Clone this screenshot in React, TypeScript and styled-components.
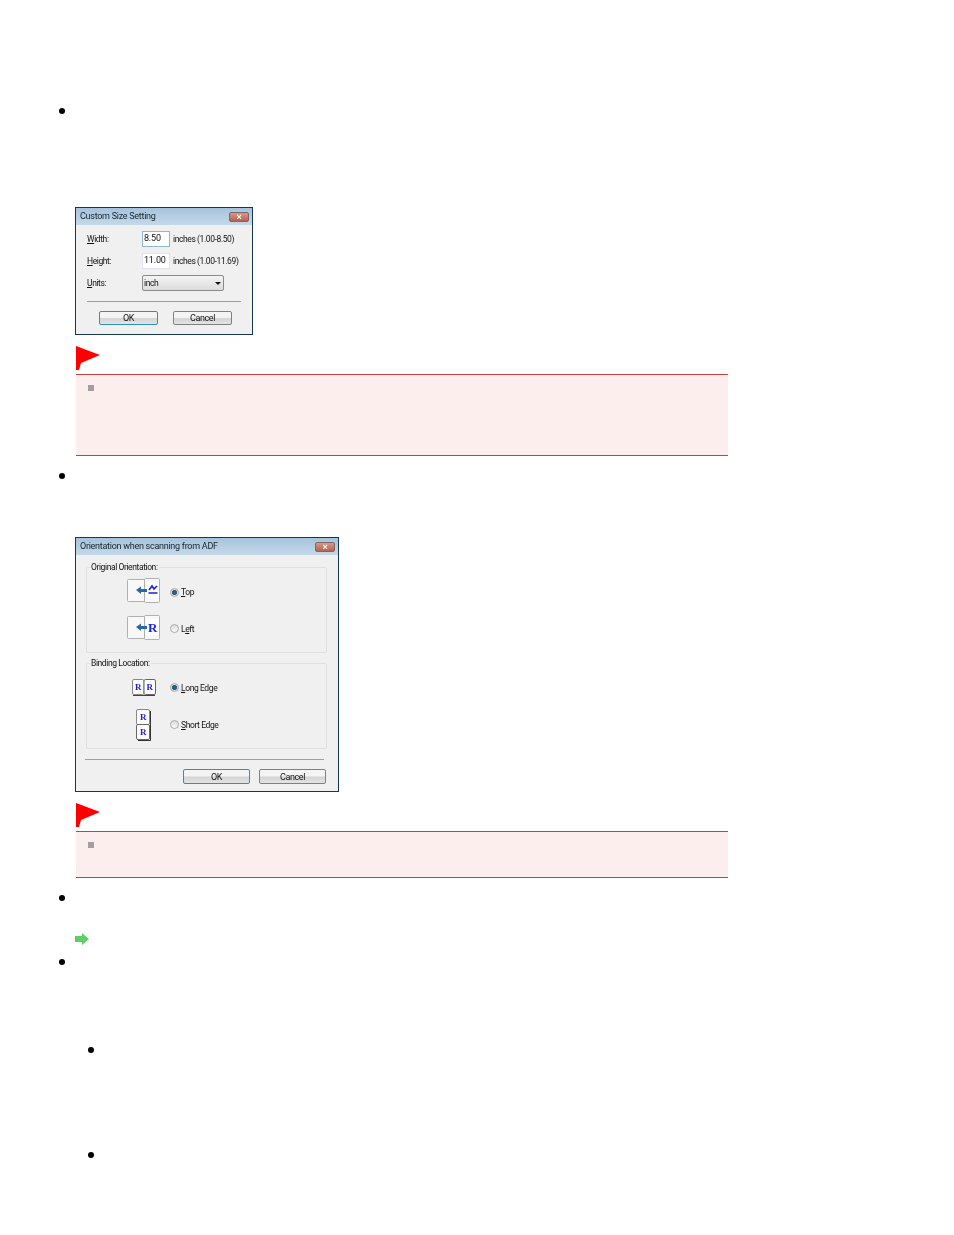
import styled, { createGlobalStyle } from "styled-components";

const GlobalStyle = createGlobalStyle`
    html, body {
        margin: 0;
        padding: 0;
        background: #fff;
    }
`;

const Page = styled.div`
    width: 954px;
    height: 1235px;
    padding: 108px 0 0 59px;
    box-sizing: border-box;
    overflow: hidden;
`;

const Bullet = styled.div<{ $top?: number; $left?: number }>`
    width: 6px;
    height: 6px;
    border-radius: 50%;
    background: #000;
    margin-top: ${(p) => p.$top ?? 0}px;
    margin-left: ${(p) => p.$left ?? 0}px;
`;

const Indented = styled.div<{ $top: number }>`
    margin: ${(p) => p.$top}px 0 0 16px;
`;

const Dialog = styled.div<{ $width: number; $height: number }>`
    width: ${(p) => p.$width}px;
    height: ${(p) => p.$height}px;
    box-sizing: border-box;
    border: 1px solid #17384c;
    background: #f0f0f0;
    display: flex;
    flex-direction: column;
    font-family: Roboto, "Liberation Sans", sans-serif;
    font-size: 8.5px;
    letter-spacing: -0.4px;
    line-height: 10px;
    color: #111;
    white-space: nowrap;
    filter: blur(0.4px);
`;

const TitleBar = styled.div`
    height: 17px;
    flex: none;
    display: flex;
    align-items: center;
    justify-content: space-between;
    padding: 0 3px 2px 4px;
    box-sizing: border-box;
    background: linear-gradient(#a6c3dc, #c4d9ea);
    font-size: 9px;
    letter-spacing: -0.27px;
    color: #16222b;
`;

const CloseBox = styled.div`
    width: 20px;
    height: 10px;
    margin-top: 2px;
    border-radius: 2px;
    border: 1px solid #85635f;
    box-sizing: border-box;
    background: linear-gradient(#d39a8c, #b8604e);
    color: #fff;
    font: bold 9px/8px "Liberation Sans", sans-serif;
    text-align: center;
`;

const SizeForm = styled.div`
    padding: 6px 11px 0 11px;
    display: flex;
    flex-direction: column;
`;

const SizeRow = styled.div`
    display: grid;
    grid-template-columns: 52px 28px auto;
    column-gap: 3px;
    align-items: center;
    height: 16px;
    margin-bottom: 6px;
`;

const TextInput = styled.div`
    height: 16px;
    box-sizing: border-box;
    background: #fff;
    border: 1px solid #e2e6ea;
    padding: 1px 1px;
    font-size: 9px;
    letter-spacing: -0.2px;
`;

const FocusInput = styled(TextInput)`
    border-color: #8fb6d2;
`;

const Select = styled.div`
    grid-column: 2 / 4;
    width: 82px;
    height: 16px;
    box-sizing: border-box;
    border: 1px solid #8a8a8a;
    border-radius: 2px;
    background: linear-gradient(#f4f4f4, #dcdcdc);
    padding: 0 2px 0 1px;
    display: flex;
    align-items: center;
    justify-content: space-between;
`;

const Caret = styled.div`
    width: 0;
    height: 0;
    border-left: 3px solid transparent;
    border-right: 3px solid transparent;
    border-top: 3px solid #111;
`;

const Separator = styled.div<{ $left: number; $width: number; $top: number }>`
    height: 1px;
    width: ${(p) => p.$width}px;
    margin: ${(p) => p.$top}px 0 0 ${(p) => p.$left}px;
    background: #a0a0a0;
`;

const ButtonRow = styled.div<{ $left: number; $top: number; $gap: number }>`
    display: flex;
    gap: ${(p) => p.$gap}px;
    margin: ${(p) => p.$top}px 0 0 ${(p) => p.$left}px;
`;

const Button = styled.div<{ $width: number; $height: number; $primary?: boolean }>`
    width: ${(p) => p.$width}px;
    height: ${(p) => p.$height}px;
    box-sizing: border-box;
    border: 1px solid ${(p) => (p.$primary ? "#2f8fc0" : "#808080")};
    border-radius: 2px;
    background: linear-gradient(#f4f4f4 45%, #d4d4d4 55%, #e4e4e4);
    display: flex;
    align-items: center;
    justify-content: center;
    font-size: 9px;
    letter-spacing: -0.4px;
`;

const OrientationBody = styled.div`
    padding: 12px 0 0 10px;
    display: flex;
    flex-direction: column;
    gap: 10px;
`;

const Group = styled.div`
    position: relative;
    width: 241px;
    height: 86px;
    box-sizing: border-box;
    border: 1px solid #e0e0e0;
    border-radius: 2px;
`;

const GroupLegend = styled.div`
    position: absolute;
    top: -6px;
    left: 3px;
    padding: 0 1px;
    background: #f0f0f0;
`;

const OptionRow = styled.div<{ $height: number }>`
    height: ${(p) => p.$height}px;
    display: flex;
    align-items: center;
`;

const OptionIcon = styled.div`
    width: 83px;
    flex: none;
    display: flex;
    justify-content: center;
    padding-left: 30px;
    box-sizing: border-box;
`;

const PageIconSvg = styled.svg`
    margin-bottom: 3px;
`;

const Radio = styled.div<{ $checked?: boolean }>`
    width: 9px;
    height: 9px;
    margin-right: 2px;
    flex: none;
    box-sizing: border-box;
    border-radius: 50%;
    border: 1px solid #a8a8a8;
    background: ${(p) => (p.$checked ? "radial-gradient(circle, #2c5f86 0 2.2px, #dfe6ea 3px)" : "linear-gradient(#dcdcdc, #fafafa)")};
`;

const GroupRows = styled.div`
    padding-top: 6px;
    display: flex;
    flex-direction: column;
`;

const FlagRow = styled.div<{ $top: number }>`
    margin: ${(p) => p.$top}px 0 0 17px;
    height: 24px;
`;

const NoteBox = styled.div<{ $height: number }>`
    width: 652px;
    height: ${(p) => p.$height}px;
    margin: 4px 0 0 17px;
    box-sizing: border-box;
    background: #fdeeee;
    border-top: 1px solid #c8403c;
    border-bottom: 1px solid #c8403c;
    padding: 10px 0 0 12px;
`;

const NoteMark = styled.div`
    width: 6px;
    height: 6px;
    background: #a0a0a0;
`;

const ArrowRow = styled.div<{ $top: number }>`
    margin: ${(p) => p.$top}px 0 0 16px;
    height: 12px;
    display: flex;
`;

const FlagIcon = () => (
    <svg width="24" height="24" viewBox="0 0 24 24">
        <path d="M0 0 L24 9 L5 17 L3 24 L0 24 Z" fill="#ff0000" />
    </svg>
);

const ArrowIcon = () => (
    <svg width="14" height="12" viewBox="0 0 14 12">
        <path d="M0 3 H7 V0 L14 6 L7 12 V9 H0 Z" fill="#5fcf64" />
    </svg>
);

const PageIcon = ({ glyph }: { glyph: "R" | "chart" }) => (
    <PageIconSvg width="33" height="25" viewBox="0 0 33 25">
        <rect x="0.5" y="1.5" width="20" height="22" rx="1" fill="#f8f8f8" stroke="#b0b0b0" />
        <rect x="17.5" y="0.5" width="15" height="24" rx="1" fill="#f8f8f8" stroke="#b0b0b0" />
        <rect x="19" y="4" width="13" height="16" fill="#fff" />
        <path d="M9 12 L14 8.5 V11 H20 V14 H14 V16 Z" fill="#2a66a8" />
        {glyph === "R" ? (
            <text x="21" y="17" fontFamily="Liberation Serif, serif" fontWeight="bold" fontSize="13" fill="#1a1fe0">R</text>
        ) : (
            <path d="M22 12 L25 8 L27 11 L30 8 M21.5 15 H30.5" fill="none" stroke="#1a1fe0" strokeWidth="1.6" />
        )}
    </PageIconSvg>
);

const BookIcon = () => (
    <svg width="24" height="17" viewBox="0 0 24 17">
        <rect x="0.5" y="0.5" width="11.5" height="15" rx="1.5" fill="#fff" stroke="#888" />
        <rect x="12" y="0.5" width="11.5" height="15" rx="1.5" fill="#fff" stroke="#666" />
        <path d="M1 16.5 H23" stroke="#444" />
        <text x="3" y="11" fontFamily="Liberation Serif, serif" fontWeight="bold" fontSize="9" fill="#1a1fe0">R</text>
        <text x="14.5" y="11" fontFamily="Liberation Serif, serif" fontWeight="bold" fontSize="9" fill="#1a1fe0">R</text>
    </svg>
);

const StackIcon = () => (
    <svg width="15" height="32" viewBox="0 0 15 32">
        <rect x="0.5" y="0.5" width="13" height="15" rx="1.5" fill="#fff" stroke="#888" />
        <rect x="0.5" y="15.5" width="13" height="15" rx="1.5" fill="#fff" stroke="#666" />
        <path d="M14.5 2 V31.5 H2" fill="none" stroke="#333" />
        <text x="4" y="11" fontFamily="Liberation Serif, serif" fontWeight="bold" fontSize="9" fill="#1a1fe0">R</text>
        <text x="4" y="26" fontFamily="Liberation Serif, serif" fontWeight="bold" fontSize="9" fill="#1a1fe0">R</text>
    </svg>
);

const App = () => (
    <Page>
        <GlobalStyle />
        <Bullet />

        <Indented $top={93}>
            <Dialog $width={178} $height={128}>
                <TitleBar>
                    Custom Size Setting
                    <CloseBox>×</CloseBox>
                </TitleBar>
                <SizeForm>
                    <SizeRow>
                        <span><u>W</u>idth:</span>
                        <FocusInput>8.50</FocusInput>
                        <span>inches (1.00-8.50)</span>
                    </SizeRow>
                    <SizeRow>
                        <span><u>H</u>eight:</span>
                        <TextInput>11.00</TextInput>
                        <span>inches (1.00-11.69)</span>
                    </SizeRow>
                    <SizeRow>
                        <span><u>U</u>nits:</span>
                        <Select>inch<Caret /></Select>
                    </SizeRow>
                </SizeForm>
                <Separator $left={11} $width={154} $top={4} />
                <ButtonRow $left={23} $top={9} $gap={15}>
                    <Button $width={59} $height={14} $primary>OK</Button>
                    <Button $width={59} $height={14}>Cancel</Button>
                </ButtonRow>
            </Dialog>
        </Indented>

        <FlagRow $top={11}><FlagIcon /></FlagRow>
        <NoteBox $height={82}><NoteMark /></NoteBox>

        <Bullet $top={17} />

        <Indented $top={58}>
            <Dialog $width={264} $height={255}>
                <TitleBar>
                    Orientation when scanning from ADF
                    <CloseBox>×</CloseBox>
                </TitleBar>
                <OrientationBody>
                    <Group>
                        <GroupLegend>Original Orientation:</GroupLegend>
                        <GroupRows>
                            <OptionRow $height={36}>
                                <OptionIcon><PageIcon glyph="chart" /></OptionIcon>
                                <Radio $checked /><span><u>T</u>op</span>
                            </OptionRow>
                            <OptionRow $height={37}>
                                <OptionIcon><PageIcon glyph="R" /></OptionIcon>
                                <Radio /><span>L<u>e</u>ft</span>
                            </OptionRow>
                        </GroupRows>
                    </Group>
                    <Group>
                        <GroupLegend>Binding Location:</GroupLegend>
                        <GroupRows>
                            <OptionRow $height={35}>
                                <OptionIcon><BookIcon /></OptionIcon>
                                <Radio $checked /><span><u>L</u>ong Edge</span>
                            </OptionRow>
                            <OptionRow $height={39}>
                                <OptionIcon><StackIcon /></OptionIcon>
                                <Radio /><span><u>S</u>hort Edge</span>
                            </OptionRow>
                        </GroupRows>
                    </Group>
                </OrientationBody>
                <Separator $left={9} $width={239} $top={10} />
                <ButtonRow $left={107} $top={9} $gap={9}>
                    <Button $width={67} $height={15} $primary>OK</Button>
                    <Button $width={67} $height={15}>Cancel</Button>
                </ButtonRow>
            </Dialog>
        </Indented>

        <FlagRow $top={11}><FlagIcon /></FlagRow>
        <NoteBox $height={47}><NoteMark /></NoteBox>

        <Bullet $top={17} />
        <ArrowRow $top={32}><ArrowIcon /></ArrowRow>
        <Bullet $top={14} />
        <Bullet $top={82} $left={29} />
        <Bullet $top={99} $left={29} />
    </Page>
);

export default App;
